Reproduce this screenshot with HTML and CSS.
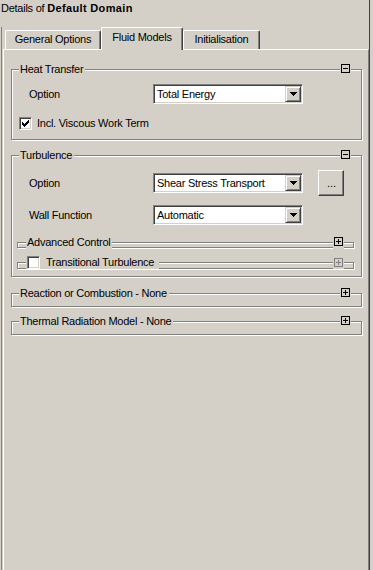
FILE: index.html
```html
<!DOCTYPE html>
<html>
<head>
<meta charset="utf-8">
<link rel="stylesheet" href="styles.css">
</head>
<body>
<div class="frame">
  <div class="title">Details of <b>Default Domain</b></div>
  <div class="body">
    <div class="tabs">
      <div class="tab t1">General Options</div>
      <div class="tab t2 active">Fluid Models</div>
      <div class="tab t3">Initialisation</div>
    </div>
    <div class="panel">
      <div class="group g-heat">
        <div class="head">
          <span class="label">Heat Transfer</span><span class="fill"></span>
          <span class="tog"><svg width="9" height="9" viewBox="0 0 9 9"><path d="M0 0h9v9H0z M1 1v7h7V1z" fill="#000" fill-rule="evenodd"/><path d="M2 4h5v1H2z" fill="#000"/></svg></span>
        </div>
        <div class="row r-first">
          <span class="lbl">Option</span>
          <div class="combo"><span class="val">Total Energy</span><span class="arrow"><svg width="7" height="4" viewBox="0 0 7 4"><path d="M0 0H7V1H6V2H5V3H4V4H3V3H2V2H1V1H0Z" fill="#000"/></svg></span></div>
        </div>
        <div class="check-row">
          <span class="cb"><svg width="7" height="7" viewBox="0 0 7 7"><path d="M0 2h1v3H0z M1 3h1v3H1z M2 4h1v3H2z M3 3h1v3H3z M4 2h1v3H4z M5 1h1v3H5z M6 0h1v3H6z" fill="#000"/></svg></span>
          <span class="ctext">Incl. Viscous Work Term</span>
        </div>
      </div>

      <div class="group g-turb">
        <div class="head">
          <span class="label">Turbulence</span><span class="fill"></span>
          <span class="tog"><svg width="9" height="9" viewBox="0 0 9 9"><path d="M0 0h9v9H0z M1 1v7h7V1z" fill="#000" fill-rule="evenodd"/><path d="M2 4h5v1H2z" fill="#000"/></svg></span>
        </div>
        <div class="row r-btn">
          <span class="lbl">Option</span>
          <div class="combo"><span class="val">Shear Stress Transport</span><span class="arrow"><svg width="7" height="4" viewBox="0 0 7 4"><path d="M0 0H7V1H6V2H5V3H4V4H3V3H2V2H1V1H0Z" fill="#000"/></svg></span></div>
          <span class="btn">...</span>
        </div>
        <div class="row r-wall">
          <span class="lbl">Wall Function</span>
          <div class="combo"><span class="val">Automatic</span><span class="arrow"><svg width="7" height="4" viewBox="0 0 7 4"><path d="M0 0H7V1H6V2H5V3H4V4H3V3H2V2H1V1H0Z" fill="#000"/></svg></span></div>
        </div>
        <div class="group sub s-adv">
          <div class="head">
            <span class="label">Advanced Control</span><span class="fill"></span>
            <span class="tog"><svg width="9" height="9" viewBox="0 0 9 9"><path d="M0 0h9v9H0z M1 1v7h7V1z" fill="#000" fill-rule="evenodd"/><path d="M2 4h5v1H2z M4 2h1v5H4z" fill="#000"/></svg></span>
          </div>
        </div>
        <div class="group sub s-trans">
          <div class="head">
            <span class="label lab-check"><span class="cb"></span><span class="ctext">Transitional Turbulence</span></span><span class="fill"></span>
            <span class="tog"><svg width="9" height="9" viewBox="0 0 9 9"><path d="M0 0h9v9H0z M1 1v7h7V1z" fill="#808080" fill-rule="evenodd"/><path d="M2 4h5v1H2z M4 2h1v5H4z" fill="#808080"/></svg></span>
          </div>
        </div>
      </div>

      <div class="group g-react">
        <div class="head">
          <span class="label">Reaction or Combustion - None</span><span class="fill"></span>
          <span class="tog"><svg width="9" height="9" viewBox="0 0 9 9"><path d="M0 0h9v9H0z M1 1v7h7V1z" fill="#000" fill-rule="evenodd"/><path d="M2 4h5v1H2z M4 2h1v5H4z" fill="#000"/></svg></span>
        </div>
      </div>

      <div class="group g-therm">
        <div class="head">
          <span class="label">Thermal Radiation Model - None</span><span class="fill"></span>
          <span class="tog"><svg width="9" height="9" viewBox="0 0 9 9"><path d="M0 0h9v9H0z M1 1v7h7V1z" fill="#000" fill-rule="evenodd"/><path d="M2 4h5v1H2z M4 2h1v5H4z" fill="#000"/></svg></span>
        </div>
      </div>
    </div>
  </div>
</div>
</body>
</html>
```
FILE: styles.css
```css
* { box-sizing: border-box; }
html, body {
  margin: 0;
  padding: 0;
  background: #d4d0c8;
  overflow: hidden;
}
body {
  width: 373px;
  height: 570px;
  font-family: "Liberation Sans", Arial, sans-serif;
  font-size: 11px;
  line-height: 13px;
  letter-spacing: -0.25px;
  color: #000;
}
svg { display: block; }

.frame {
  width: 370px;
  height: 570px;
  border-right: 1px solid #404040;
}
.title {
  height: 27px;
  line-height: 16px;
  padding-left: 1px;
  white-space: nowrap;
}
.title b { letter-spacing: 0.35px; }

.body {
  margin-left: 1px;
  border-left: 1px solid #808080;
  height: 543px;
}
.tabs {
  display: flex;
  align-items: flex-end;
  height: 22px;
  padding-left: 3px;
}
.tab {
  height: 19px;
  padding-top: 2px;
  text-align: center;
  border-top: 1px solid #fff;
  border-left: 1px solid #fff;
  border-right: 1px solid #404040;
  box-shadow: inset -1px 0 0 #808080;
  border-radius: 2px 2px 0 0;
  white-space: nowrap;
}
.t1 { width: 96px; }
.t2 { width: 82px; }
.t3 { width: 77px; }
.tab.active {
  height: 23px;
  padding-top: 3px;
  margin-bottom: -1px;
  position: relative;
  z-index: 1;
  background: #d4d0c8;
}

.panel {
  margin-left: 1px;
  width: 366px;
  height: 521px;
  border-top: 1px solid #fff;
  border-left: 1px solid #fff;
  border-right: 1px solid #808080;
  padding: 0 6px 0 7px;
}

.group {
  border: 1px solid #808080;
  box-shadow: inset 1px 1px 0 #fff, 1px 1px 0 #fff;
  padding: 0 0 0 7px;
}
.head {
  display: flex;
  align-items: center;
  height: 13px;
  margin-top: -7px;
  margin-left: -7px;
  padding: 0 10px 0 7px;
}
.label {
  background: #d4d0c8;
  padding: 0 2px 0 1px;
  white-space: nowrap;
  height: 13px;
}
.fill { flex: 1; }
.tog {
  background: #d4d0c8;
  padding: 1px 1px 3px 1px;
}

.g-heat { margin-top: 19px; padding-bottom: 9px; }
.g-turb { margin-top: 15px; padding-bottom: 7px; }
.g-react { margin-top: 16px; padding-bottom: 6px; }
.g-therm { margin-top: 14px; padding-bottom: 6px; }

.row {
  display: flex;
  align-items: center;
  padding-left: 10px;
}
.lbl { width: 124px; white-space: nowrap; }
.r-first { margin-top: 8px; }
.r-btn { margin-top: 8px; height: 26px; }
.r-wall { margin-top: 9px; }

.combo {
  width: 150px;
  height: 20px;
  display: flex;
  align-items: center;
  background: #fff;
  border: 1px solid;
  border-color: #808080 #fff #fff #808080;
  box-shadow: inset 1px 1px 0 #404040, inset -1px -1px 0 #d4d0c8;
  padding: 0 1px 0 3px;
}
.val { flex: 1; white-space: nowrap; overflow: hidden; }
.arrow {
  width: 16px;
  height: 16px;
  display: flex;
  align-items: center;
  justify-content: center;
  padding-left: 0;
  background: #d4d0c8;
  border: 1px solid;
  border-color: #d4d0c8 #404040 #404040 #d4d0c8;
  box-shadow: inset 1px 1px 0 #fff, inset -1px -1px 0 #808080;
}
.btn {
  margin-left: 15px;
  width: 26px;
  height: 26px;
  display: flex;
  align-items: center;
  justify-content: center;
  border: 1px solid;
  border-color: #fff #404040 #404040 #fff;
  box-shadow: inset -1px -1px 0 #808080;
  letter-spacing: 0;
  padding-left: 1px;
}

.check-row {
  display: flex;
  align-items: center;
  margin-top: 13px;
  height: 13px;
}
.cb {
  width: 13px;
  height: 13px;
  flex: none;
  display: flex;
  align-items: center;
  justify-content: center;
  background: #fff;
  border: 1px solid;
  border-color: #808080 #fff #fff #808080;
  box-shadow: inset 1px 1px 0 #404040, inset -1px -1px 0 #d4d0c8;
}
.ctext { margin-left: 5px; white-space: nowrap; }

.sub {
  margin-left: -2px;
  margin-right: 7px;
  padding-left: 8px;
}
.sub .head {
  margin-left: -8px;
  padding: 0 9px 0 8px;
}
.sub .tog { padding: 1px 1px 3px 1px; }
.s-adv { margin-top: 17px; }
.s-adv .head { margin-bottom: -2px; }
.s-trans { margin-top: 14px; }
.s-trans .head { margin-bottom: -1px; }
.s-trans .tog { padding: 2px 1px 2px 1px; }
.lab-check {
  display: flex;
  align-items: center;
  padding: 0 5px 0 1px;
}
.lab-check .ctext { margin-left: 6px; }
```
